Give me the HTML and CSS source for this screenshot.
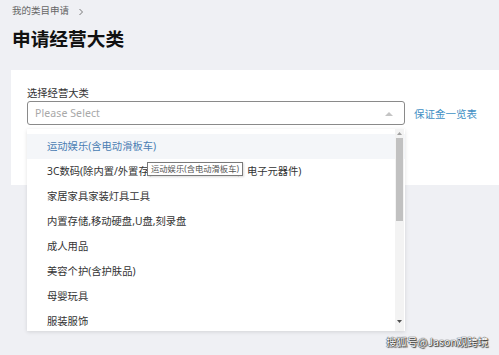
FILE: index.html
```html
<!DOCTYPE html>
<html lang="zh">
<head>
<meta charset="utf-8">
<link rel="stylesheet" href="styles.css">
</head>
<body>
<div class="crumb">
  <span>我的类目申请</span>
  <svg class="chev" width="6" height="8" viewBox="0 0 6 8"><path d="M1.5 1 L4.5 4 L1.5 7" fill="none" stroke="#777" stroke-width="1"/></svg>
</div>
<h1 class="title">申请经营大类</h1>
<div class="card">
  <div class="label">选择经营大类</div>
  <div class="row">
    <div class="select">
      <span class="placeholder">Please Select</span>
      <svg class="caret" width="8" height="5" viewBox="0 0 8 5"><path d="M0 5 L4 1 L8 5 Z" fill="#c4c4c4"/></svg>
      <div class="dropdown">
        <ul class="list">
          <li class="item active">运动娱乐(含电动滑板车)</li>
          <li class="item">3C数码(除内置/外置存储,移动硬盘,刻录盘，电子元器件)</li>
          <li class="item">家居家具家装灯具工具</li>
          <li class="item">内置存储,移动硬盘,U盘,刻录盘</li>
          <li class="item">成人用品</li>
          <li class="item">美容个护(含护肤品)</li>
          <li class="item">母婴玩具</li>
          <li class="item">服装服饰</li>
        </ul>
        <div class="scrollbar">
          <svg class="arr up" width="5" height="3" viewBox="0 0 5 3"><path d="M0 3 L2.5 0 L5 3 Z" fill="#a0a0a0"/></svg>
          <div class="thumb"></div>
          <svg class="arr down" width="5" height="3" viewBox="0 0 5 3"><path d="M0 0 L2.5 3 L5 0 Z" fill="#505050"/></svg>
        </div>
      </div>
      <div class="tooltip">运动娱乐(含电动滑板车)</div>
    </div>
    <a class="link">保证金一览表</a>
  </div>
</div>
<div class="watermark">搜狐号@Jason观跨境</div>
</body>
</html>
```
FILE: styles.css
```css
* { box-sizing: border-box; }
html, body { margin: 0; padding: 0; }
body {
  width: 499px;
  height: 355px;
  overflow: hidden;
  background: #eff0f4;
  font-family: "Noto Sans", "Noto Sans CJK SC", sans-serif;
  color: #333;
  position: relative;
}
.crumb {
  display: flex;
  align-items: center;
  gap: 9px;
  padding: 4px 0 0 12px;
  height: 18px;
  font-size: 9.5px;
  line-height: 14px;
  color: #666;
}
.chev { margin-top: 1px; }
.title {
  margin: 8px 0 0 12px;
  font-size: 18.7px;
  line-height: 24px;
  font-weight: 700;
  color: #111;
  font-family: "Noto Sans CJK SC", sans-serif;
}
.card {
  margin: 20px 0 0 11px;
  height: 115px;
  background: #fff;
  padding: 16px 16px 0 16px;
}
.label {
  font-size: 10.3px;
  line-height: 14px;
  color: #333;
}
.row {
  display: flex;
  align-items: center;
  margin-top: 1px;
}
.select {
  position: relative;
  width: 378px;
  height: 24px;
  border: 1px solid #8a8a8a;
  border-radius: 3px;
  display: flex;
  align-items: center;
  padding: 0 10px 0 7px;
}
.placeholder {
  flex: 1;
  font-size: 10.5px;
  color: #a8a8a8;
  letter-spacing: 0.1px;
}
.caret { margin-right: 1px; }
.link {
  margin-left: 9px;
  font-size: 10.5px;
  color: #3f8fc4;
}
.dropdown {
  position: absolute;
  left: -1px;
  top: 27px;
  width: 378px;
  height: 202px;
  background: #fff;
  overflow: hidden;
  box-shadow: 0 1px 4px rgba(0,0,0,0.12);
  z-index: 5;
}
.list {
  list-style: none;
  margin: 0;
  padding: 5px 0 0 0;
}
.item {
  height: 25px;
  line-height: 25px;
  padding-left: 20px;
  font-size: 10.3px;
  color: #333;
  white-space: nowrap;
}
.item.active {
  background: #f4f6f9;
  color: #4a7db3;
}
.scrollbar {
  position: absolute;
  right: 1px;
  top: 0;
  width: 9px;
  height: 202px;
  background: #f3f3f3;
}
.arr { position: absolute; left: 2px; }
.arr.up { top: 3px; }
.arr.down { bottom: 8px; }
.thumb {
  position: absolute;
  left: 1px;
  top: 9px;
  width: 7px;
  height: 83px;
  background: #c1c1c1;
}
.tooltip {
  position: absolute;
  left: 119px;
  top: 60px;
  width: 96px;
  height: 14px;
  border: 1px solid #7a7a7a;
  background: #fff;
  font-size: 8.3px;
  line-height: 12px;
  padding-left: 3px;
  color: #555;
  white-space: nowrap;
  z-index: 6;
  box-shadow: 1px 1px 2px rgba(0,0,0,0.15);
}
.watermark {
  position: absolute;
  left: 386px;
  top: 334px;
  font-size: 10.5px;
  line-height: 16px;
  color: #fff;
  font-family: "Noto Sans CJK SC", sans-serif;
  text-shadow: 0 0 1px #222, 0 0 1px #222, 1px 1px 1px #333;
}
```
